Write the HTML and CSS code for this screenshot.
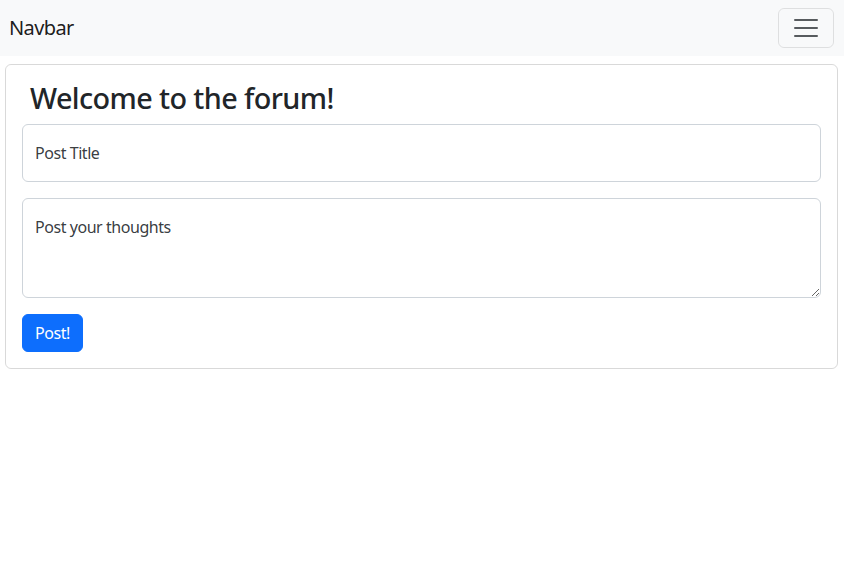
FILE: index.html
```html
<!DOCTYPE html>
<html lang="en">
<head>
<meta charset="utf-8">
<title>Forum</title>
<link rel="stylesheet" href="styles.css">
</head>
<body>
<nav class="navbar">
  <a class="brand" href="#">Navbar</a>
  <button class="toggler" type="button" aria-label="Toggle navigation">
    <svg class="toggler-icon" viewBox="0 0 30 30" width="30" height="30"><path d="M4 7h22M4 15h22M4 23h22" stroke="rgba(33,37,41,0.75)" stroke-width="2" stroke-linecap="round" stroke-miterlimit="10" fill="none"/></svg>
  </button>
</nav>
<main class="card">
  <div class="card-body">
    <h2 class="title">Welcome to the forum!</h2>
    <form class="post-form">
      <div class="floating">
        <input class="control" type="text" id="title">
        <label class="float-label" for="title">Post Title</label>
      </div>
      <div class="floating">
        <textarea class="control area" id="body"></textarea>
        <label class="float-label" for="body">Post your thoughts</label>
      </div>
      <button class="btn-primary" type="button">Post!</button>
    </form>
  </div>
</main>
</body>
</html>
```
FILE: styles.css
```css
* { box-sizing: border-box; }
body {
  margin: 0;
  font-family: "Noto Sans", "Open Sans", sans-serif;
  font-size: 16px;
  line-height: 1.5;
  color: #212529;
  background: #fff;
  letter-spacing: -0.45px;
}
.navbar {
  display: flex;
  align-items: center;
  justify-content: space-between;
  background: #f8f9fa;
  padding: 8px 10px 8px 9px;
  height: 56px;
}
.brand {
  font-size: 20px;
  color: rgba(0,0,0,0.9);
  text-decoration: none;
  line-height: 1.5;
  letter-spacing: -0.6px;
}
.toggler {
  width: 56px;
  height: 40px;
  padding: 4px 12px;
  background: transparent;
  border: 1px solid rgba(0,0,0,0.1);
  border-radius: 6px;
  display: flex;
  align-items: center;
  justify-content: center;
}
.toggler-icon { display: block; }
.card {
  display: block;
  margin: 8px 6px 0 5px;
  border: 1px solid rgba(0,0,0,0.15);
  border-radius: 6px;
}
.card-body { padding: 16px; }
.title {
  margin: 0 0 8px;
  padding-left: 8px;
  font-size: 28.8px;
  font-weight: 500;
  line-height: 34.56px;
  letter-spacing: -0.6px;
}
.post-form { display: flex; flex-direction: column; align-items: flex-start; }
.floating {
  position: relative;
  width: 100%;
  margin-bottom: 16px;
}
.control {
  display: block;
  width: 100%;
  height: 58px;
  padding: 16px 12px;
  font: inherit;
  letter-spacing: inherit;
  color: #212529;
  border: 1px solid #ced4da;
  border-radius: 6px;
  background: #fff;
}
.area { height: 100px; resize: vertical; }
.float-label {
  position: absolute;
  top: 0;
  left: 0;
  padding: 16px 12px;
  border: 1px solid transparent;
  color: rgba(33,37,41,0.9);
  pointer-events: none;
  line-height: 1.5;
}
.btn-primary {
  font: inherit;
  letter-spacing: inherit;
  color: #fff;
  background: #0d6efd;
  border: 1px solid #0d6efd;
  border-radius: 6px;
  padding: 6px 12px;
  line-height: 1.5;
}
```
